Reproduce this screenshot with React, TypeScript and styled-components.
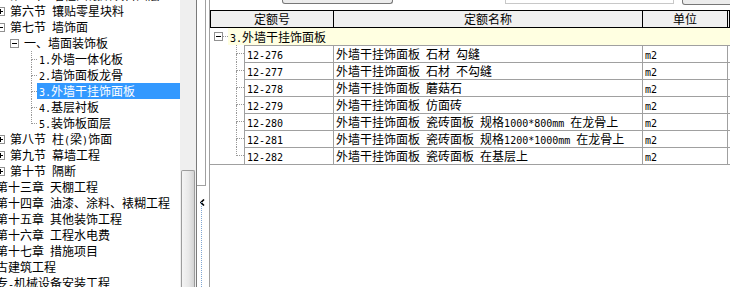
import React from 'react';
import styled, { createGlobalStyle } from 'styled-components';

const GlobalStyle = createGlobalStyle`
  html, body {
    margin: 0;
    padding: 0;
    background: #fff;
  }
  body {
    font-family: "Noto Sans CJK SC", "Noto Sans", sans-serif;
    font-size: 12px;
    color: #000;
  }
`;

const Window = styled.div`
  display: flex;
  width: 730px;
  height: 287px;
  overflow: hidden;
  background: #fff;
`;

/* ---------- left tree ---------- */

const TreePane = styled.div`
  width: 180px;
  flex: none;
  overflow: hidden;
`;

// list is scrolled, first row only half visible
const TreeList = styled.div`
  margin-top: -13px;
`;

const TreeRow = styled.div<{ $x: number }>`
  display: flex;
  align-items: center;
  height: 16px;
  margin-left: ${p => p.$x}px;
  white-space: nowrap;
`;

const Label = styled.span<{ $selected?: boolean }>`
  flex: 1;
  height: 16px;
  line-height: 16px;
  padding-left: 2px;
  background: ${p => (p.$selected ? '#3399ff' : 'transparent')};
  color: ${p => (p.$selected ? '#fff' : '#000')};
`;

const Asc = styled.span`
  font-family: "DejaVu Sans Mono", "Liberation Mono", monospace;
  font-size: 10px;
`;

const ExpanderBox = styled.svg<{ $gap: number }>`
  flex: none;
  display: block;
  margin-right: ${p => p.$gap}px;
`;

const Connector = styled.span<{ $w: number }>`
  display: flex;
  flex-direction: column;
  align-self: stretch;
  flex: none;
  width: ${p => p.$w}px;
`;

const ConnTop = styled.span`
  height: 8px;
  border-left: 1px dotted #999;
  border-bottom: 1px dotted #999;
`;

const ConnBottom = styled.span<{ $last?: boolean }>`
  flex: 1;
  border-left: 1px dotted ${p => (p.$last ? 'transparent' : '#999')};
`;

/* ---------- scrollbar + splitter ---------- */

const ScrollTrack = styled.div`
  width: 16px;
  flex: none;
  box-sizing: border-box;
  padding-top: 170px;
  background: #efefef;
  display: flex;
  flex-direction: column;
`;

const ScrollThumb = styled.div`
  flex: 1;
  margin: 0 1px;
  border: 1px solid #9c9c9c;
  border-bottom: none;
  border-radius: 2px 2px 0 0;
  background: linear-gradient(to right, #f4f4f4, #e8e8e8 55%, #d4d4d4);
`;

const Splitter = styled.div`
  width: 10px;
  flex: none;
  box-sizing: border-box;
  border-left: 1px solid #7a7a7a;
  display: flex;
  flex-direction: column;
`;

const SplitTop = styled.div`
  height: 186px;
  flex: none;
  box-sizing: border-box;
  border-right: 1px solid #a0a0a0;
  border-bottom: 1px solid #a0a0a0;
`;

const Grip = styled.div`
  height: 16px;
  flex: none;
  padding: 6px 0 0 3px;
  box-sizing: border-box;
`;

const GripDots = styled.div`
  flex: 1;
  margin-left: 4px;
  border-left: 1px dotted #7fa6d3;
`;

/* ---------- right side ---------- */

const RightPane = styled.div`
  flex: 1;
  min-width: 0;
  margin-left: 3px;
  border-left: 1px solid #a0a0a0;
  display: flex;
  flex-direction: column;
`;

const Toolbar = styled.div`
  height: 10px;
  flex: none;
  display: flex;
  align-items: flex-start;
  overflow: hidden;
`;

const ToolButton = styled.div<{ $ml: number; $w: number; $h: number }>`
  flex: none;
  margin-left: ${p => p.$ml}px;
  width: ${p => p.$w}px;
  height: ${p => p.$h}px;
  box-sizing: border-box;
  border: 1px solid #777;
  border-top: none;
  border-radius: 0 0 3px 3px;
  background: #ececec;
`;

const ToolInput = styled.div<{ $ml: number; $w: number }>`
  flex: none;
  margin-left: ${p => p.$ml}px;
  width: ${p => p.$w}px;
  height: 4px;
  box-sizing: border-box;
  border: 1px solid #c8c8c8;
  border-top: none;
  background: #fff;
`;

const Table = styled.div`
  border-bottom: 1px solid #a0a0a0;
`;

const HeaderRow = styled.div`
  display: flex;
  height: 18px;
  box-sizing: border-box;
  border-top: 1px solid #000;
  border-bottom: 1px solid #000;
  border-left: 1px solid #000;
  background: #f0f0f0;
`;

const HeadCell = styled.div<{ $w?: number }>`
  ${p => (p.$w ? `width: ${p.$w}px; flex: none;` : 'flex: 1;')}
  box-sizing: border-box;
  border-right: 1px solid #000;
  line-height: 16px;
  text-align: center;
  white-space: nowrap;
`;

const GroupRow = styled.div`
  display: flex;
  height: 17px;
`;

const GroupGutter = styled.div`
  width: 18px;
  flex: none;
  display: flex;
  align-items: center;
  padding-left: 4px;
  box-sizing: border-box;
`;

const GroupStub = styled.span`
  flex: 1;
  border-top: 1px dotted #999;
`;

const GroupCell = styled.div`
  flex: 1;
  background: #ffffe1;
  padding-left: 2px;
  line-height: 17px;
  white-space: nowrap;
`;

const DataRow = styled.div`
  display: flex;
  height: 17px;
`;

const RowGutter = styled.div`
  width: 34px;
  flex: none;
  display: flex;
  padding-left: 26px;
  box-sizing: border-box;
`;

const Cell = styled.div<{ $w?: number; $first?: boolean }>`
  ${p => (p.$w ? `width: ${p.$w}px; flex: none;` : 'flex: 1;')}
  box-sizing: border-box;
  border-top: 1px solid #a0a0a0;
  border-right: 1px solid #a0a0a0;
  ${p => (p.$first ? 'border-left: 1px solid #a0a0a0;' : '')}
  padding-left: 2px;
  line-height: 16px;
  white-space: nowrap;
  overflow: hidden;
`;

/* ---------- helpers ---------- */

// ascii runs get a half-width mono face, like the old bitmap font
function Txt({ children }: { children: string }) {
  const parts = children.split(/([\x20-\x7e]+)/);
  return (
    <>
      {parts.map((s, i) =>
        s === '' ? null : /^[\x20-\x7e]+$/.test(s) ? (
          <Asc key={i}>{s}</Asc>
        ) : (
          <React.Fragment key={i}>{s}</React.Fragment>
        )
      )}
    </>
  );
}

function Expander({ open, gap }: { open: boolean; gap: number }) {
  return (
    <ExpanderBox $gap={gap} width="9" height="9" viewBox="0 0 9 9" shapeRendering="crispEdges">
      <rect x="0.5" y="0.5" width="8" height="8" fill="#fff" stroke="#919191" />
      <line x1="2" y1="4.5" x2="7" y2="4.5" stroke="#000" />
      {!open && <line x1="4.5" y1="2" x2="4.5" y2="7" stroke="#000" />}
    </ExpanderBox>
  );
}

type Node = {
  level: number;
  text: string;
  toggle?: 'open' | 'closed';
  selected?: boolean;
  last?: boolean;
};

const levelX: Record<number, number> = { 0: -18, 1: -4, 2: 10, 3: 31 };

const tree: Node[] = [
  { level: 1, text: '第五节 墙柱面镶贴块料面层', toggle: 'closed' },
  { level: 1, text: '第六节 镶贴零星块料', toggle: 'closed' },
  { level: 1, text: '第七节 墙饰面', toggle: 'open' },
  { level: 2, text: '一、墙面装饰板', toggle: 'open' },
  { level: 3, text: '1.外墙一体化板' },
  { level: 3, text: '2.墙饰面板龙骨' },
  { level: 3, text: '3.外墙干挂饰面板', selected: true },
  { level: 3, text: '4.基层衬板' },
  { level: 3, text: '5.装饰板面层', last: true },
  { level: 1, text: '第八节 柱(梁)饰面', toggle: 'closed' },
  { level: 1, text: '第九节 幕墙工程', toggle: 'closed' },
  { level: 1, text: '第十节 隔断', toggle: 'closed' },
  { level: 0, text: '第十三章 天棚工程', toggle: 'closed' },
  { level: 0, text: '第十四章 油漆、涂料、裱糊工程', toggle: 'closed' },
  { level: 0, text: '第十五章 其他装饰工程', toggle: 'closed' },
  { level: 0, text: '第十六章 工程水电费', toggle: 'closed' },
  { level: 0, text: '第十七章 措施项目', toggle: 'closed' },
  { level: 0, text: '古建筑工程', toggle: 'closed' },
  { level: 0, text: '专-机械设备安装工程', toggle: 'closed' },
];

const items = [
  { code: '12-276', name: '外墙干挂饰面板 石材 勾缝', unit: 'm2' },
  { code: '12-277', name: '外墙干挂饰面板 石材 不勾缝', unit: 'm2' },
  { code: '12-278', name: '外墙干挂饰面板 蘑菇石', unit: 'm2' },
  { code: '12-279', name: '外墙干挂饰面板 仿面砖', unit: 'm2' },
  { code: '12-280', name: '外墙干挂饰面板 瓷砖面板 规格1000*800mm 在龙骨上', unit: 'm2' },
  { code: '12-281', name: '外墙干挂饰面板 瓷砖面板 规格1200*1000mm 在龙骨上', unit: 'm2' },
  { code: '12-282', name: '外墙干挂饰面板 瓷砖面板 在基层上', unit: 'm2' },
];

function App() {
  return (
    <Window>
      <GlobalStyle />
      <TreePane>
        <TreeList>
          {tree.map((n, i) => (
            <TreeRow key={i} $x={levelX[n.level]}>
              {n.toggle ? (
                <Expander open={n.toggle === 'open'} gap={3} />
              ) : (
                <Connector $w={6}>
                  <ConnTop />
                  <ConnBottom $last={n.last} />
                </Connector>
              )}
              <Label $selected={n.selected}>
                <Txt>{n.text}</Txt>
              </Label>
            </TreeRow>
          ))}
        </TreeList>
      </TreePane>

      <ScrollTrack>
        <ScrollThumb />
      </ScrollTrack>

      <Splitter>
        <SplitTop />
        <Grip>
          <svg width="5" height="7" viewBox="0 0 5 7">
            <polyline points="4,0.5 1,3.5 4,6.5" fill="none" stroke="#000" strokeWidth="1.6" />
          </svg>
        </Grip>
        <GripDots />
      </Splitter>

      <RightPane>
        <Toolbar>
          <ToolButton $ml={72} $w={111} $h={4} />
          <ToolInput $ml={112} $w={169} />
          <ToolButton $ml={8} $w={60} $h={5} />
        </Toolbar>

        <Table>
          <HeaderRow>
            <HeadCell $w={123}>定额号</HeadCell>
            <HeadCell $w={309}>定额名称</HeadCell>
            <HeadCell $w={85}>单位</HeadCell>
            <HeadCell />
          </HeaderRow>

          <GroupRow>
            <GroupGutter>
              <Expander open gap={0} />
              <GroupStub />
            </GroupGutter>
            <GroupCell>
              <Txt>3.外墙干挂饰面板</Txt>
            </GroupCell>
          </GroupRow>

          {items.map((it, i) => (
            <DataRow key={it.code}>
              <RowGutter>
                <Connector $w={8}>
                  <ConnTop />
                  <ConnBottom $last={i === items.length - 1} />
                </Connector>
              </RowGutter>
              <Cell $w={90} $first>
                <Txt>{it.code}</Txt>
              </Cell>
              <Cell $w={309}>
                <Txt>{it.name}</Txt>
              </Cell>
              <Cell $w={85}>
                <Txt>{it.unit}</Txt>
              </Cell>
              <Cell />
            </DataRow>
          ))}
        </Table>
      </RightPane>
    </Window>
  );
}

export default App;
